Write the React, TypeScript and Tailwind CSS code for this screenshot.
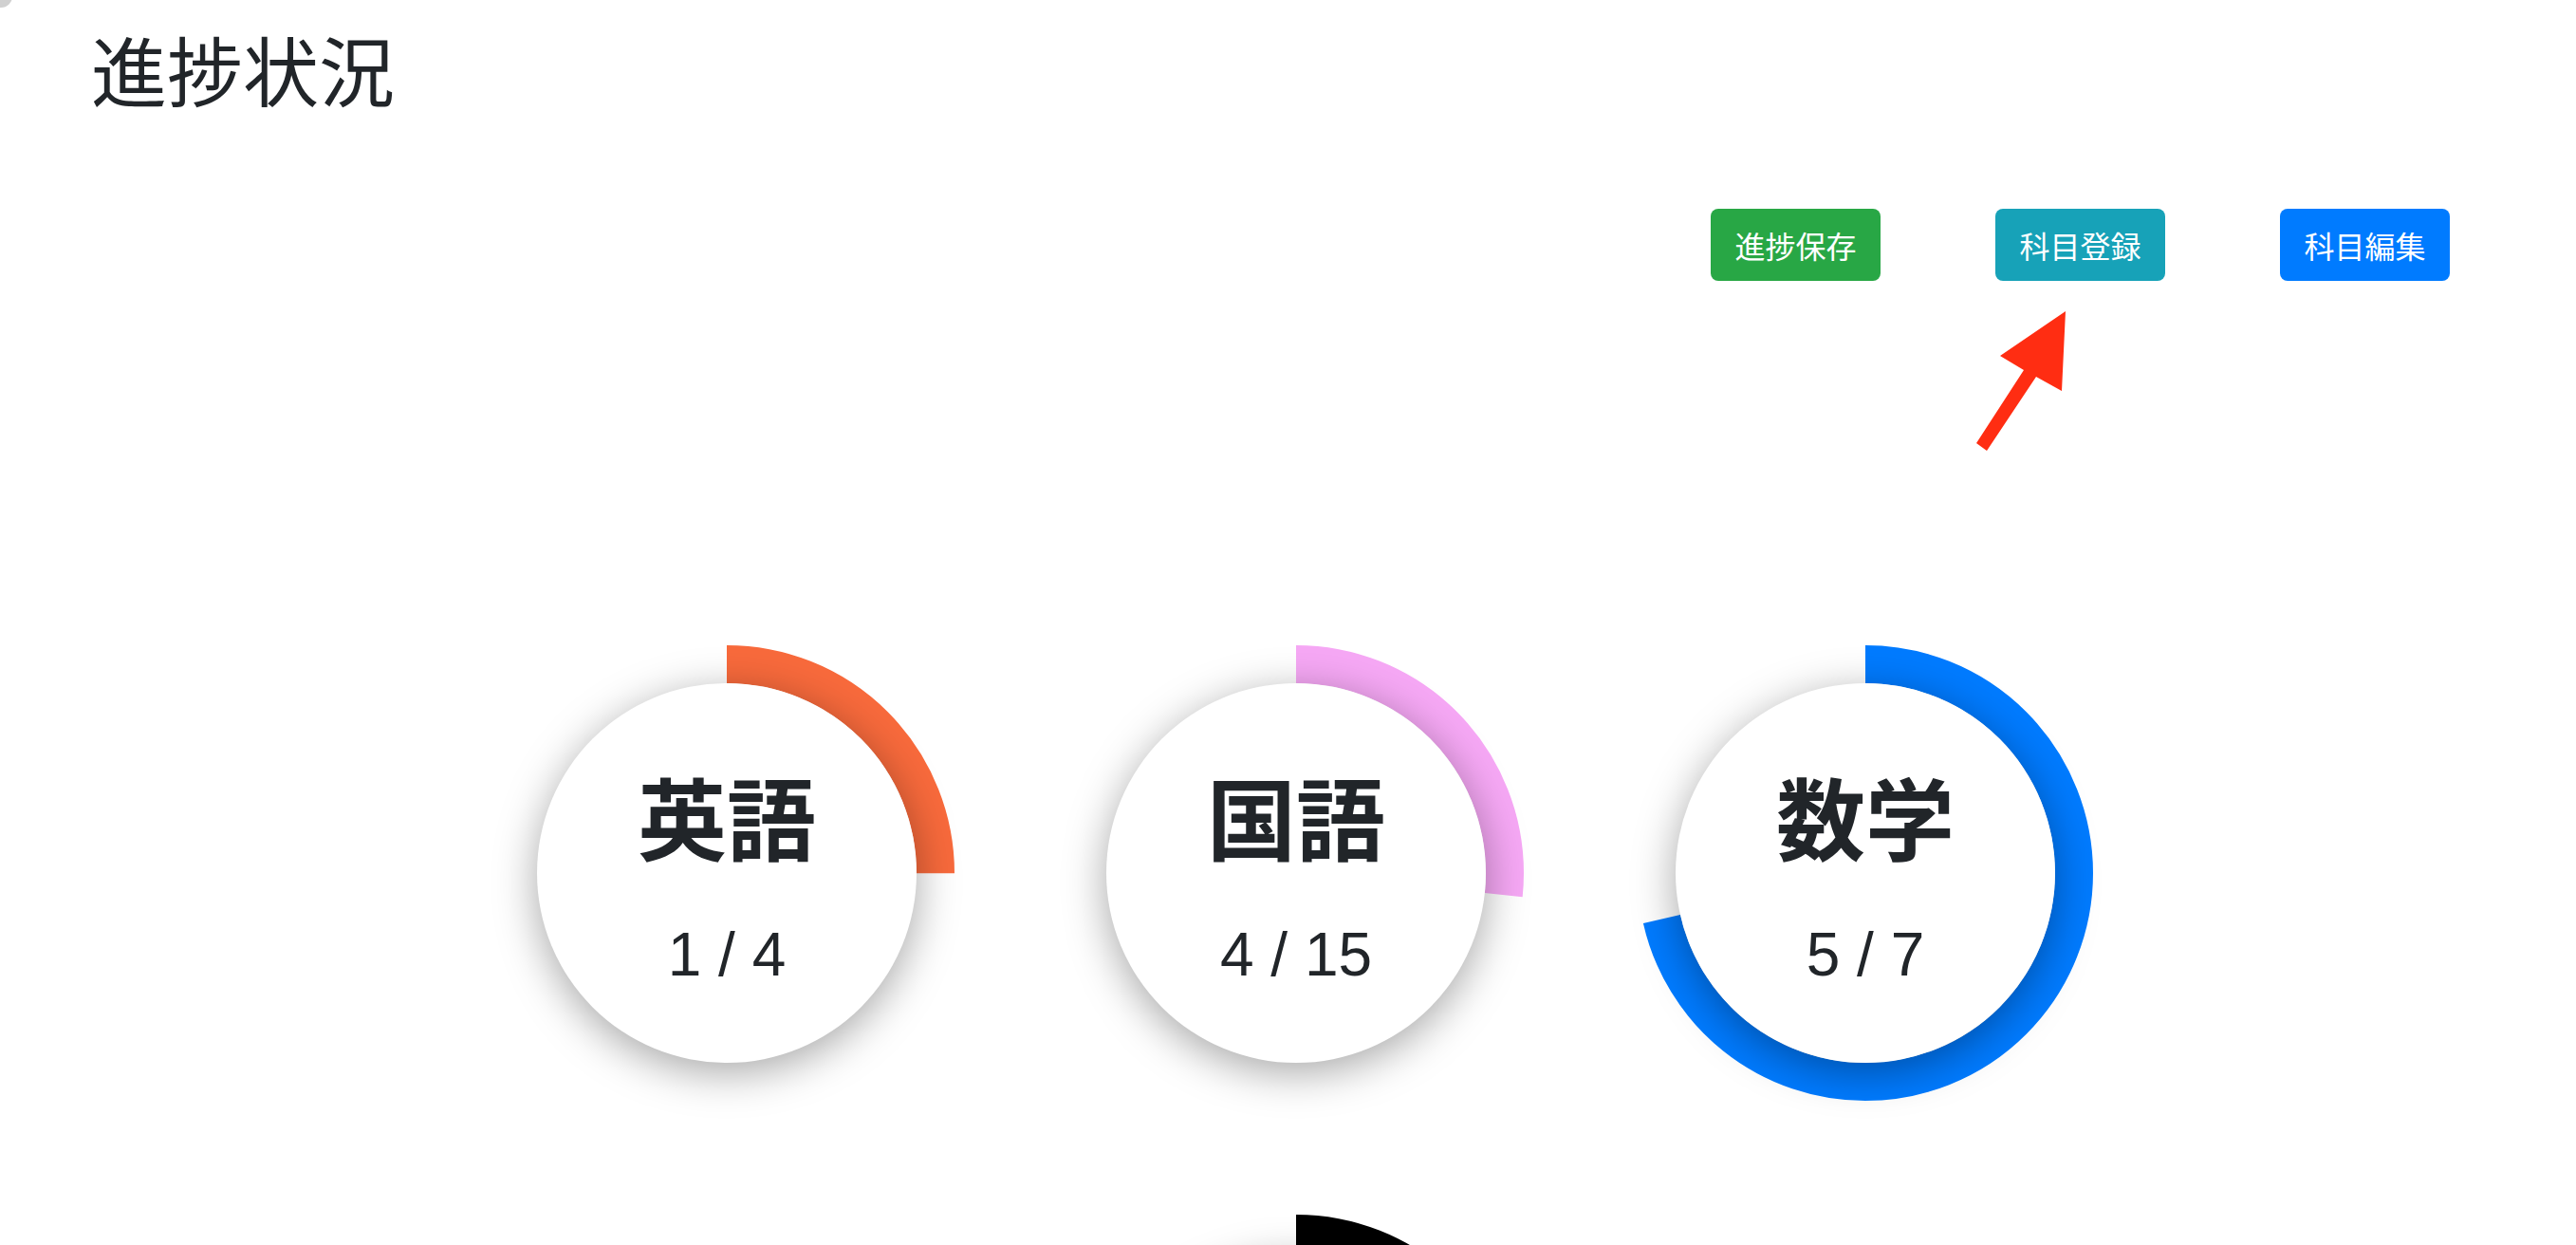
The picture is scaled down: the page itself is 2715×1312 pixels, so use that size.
import type { FC } from "react";

type Subject = { name: string; done: number; total: number; color: string };

const subjects: Subject[] = [
  { name: "英語", done: 1, total: 4, color: "#f86a3c" },
  { name: "国語", done: 4, total: 15, color: "#f6a8f5" },
  { name: "数学", done: 5, total: 7, color: "#007bff" },
  { name: "社会", done: 3, total: 6, color: "#000000" },
];

const R = 220;
const C = 2 * Math.PI * R;

const ProgressRing: FC<{ subject: Subject }> = ({ subject }) => {
  const len = (subject.done / subject.total) * C;
  return (
    <div className="flex h-[600px] w-[600px] items-center justify-center">
      <div className="relative h-[480px] w-[480px]">
        <svg width={480} height={480} viewBox="0 0 480 480" className="-rotate-90">
          <circle
            cx={240}
            cy={240}
            r={R}
            fill="none"
            stroke={subject.color}
            strokeWidth={40}
            strokeDasharray={`${len} ${C}`}
          />
        </svg>
        <div className="absolute left-[40px] top-[40px] flex h-[400px] w-[400px] flex-col items-center rounded-full bg-white pt-[92px] shadow-[0_10px_45px_rgba(0,0,0,0.35)]">
          <p className="font-['Noto_Sans_CJK_JP',sans-serif] text-[94px] font-bold leading-none text-[#212529]">
            {subject.name}
          </p>
          <p className="mt-[68px] font-['Liberation_Sans',sans-serif] text-[64px] leading-none text-[#212529]">
            {subject.done} / {subject.total}
          </p>
        </div>
      </div>
    </div>
  );
};

const buttons = [
  { label: "進捗保存", className: "bg-[#28a745]" },
  { label: "科目登録", className: "bg-[#17a2b8]" },
  { label: "科目編集", className: "bg-[#007bff]" },
];

export default function App() {
  return (
    <div className="relative min-h-screen overflow-hidden bg-white font-['Noto_Sans_CJK_JP',sans-serif] text-[#212529]">
      <div className="absolute -left-[11px] -top-[16px] h-[24px] w-[24px] rounded-full bg-[#d0d0d0]" />
      <h1 className="pl-[96px] pt-[31px] text-[80px] font-normal leading-none">進捗状況</h1>

      <div className="mt-[109px] flex justify-end gap-[121px] pr-[133px]">
        {buttons.map((b) => (
          <button
            key={b.label}
            type="button"
            className={`${b.className} h-[76px] w-[179px] rounded-[8px] text-[32px] leading-none text-white`}
          >
            {b.label}
          </button>
        ))}
      </div>

      <div className="mx-auto mt-[324px] flex w-[1817px] flex-wrap justify-center pl-[17px]">
        {subjects.map((s) => (
          <ProgressRing key={s.name} subject={s} />
        ))}
      </div>

      <svg
        className="pointer-events-none absolute left-0 top-0"
        width={2715}
        height={1312}
        viewBox="0 0 2715 1312"
      >
        <polygon
          points="2177,328 2173,412 2146,397 2094,475 2083,467 2133,390 2108,375"
          fill="#ff2d12"
        />
      </svg>
    </div>
  );
}
